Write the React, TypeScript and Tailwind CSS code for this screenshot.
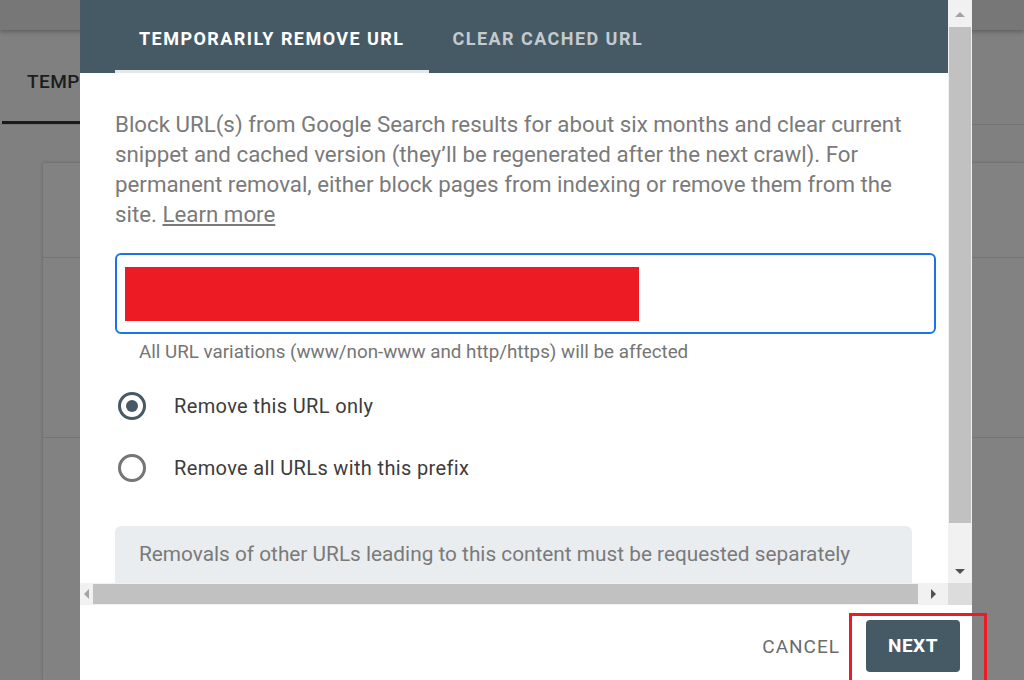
import React from "react";

const font = { fontFamily: "Roboto, 'Liberation Sans', sans-serif" };

function Radio({ checked }: { checked?: boolean }) {
    return (
        <span
            className={`flex h-[28px] w-[28px] items-center justify-center rounded-full border-[3px] ${
                checked ? "border-[#455a64]" : "border-[#757575]"
            }`}
        >
            {checked && <span className="h-[12px] w-[12px] rounded-full bg-[#455a64]" />}
        </span>
    );
}

function Backdrop() {
    return (
        <div className="flex h-full w-full flex-col bg-[#808080]">
            <div className="h-[30px] bg-[#777777] shadow-[0_2px_4px_rgba(0,0,0,0.25)]" />
            <div className="flex h-[95px] items-end border-b border-[#747474]">
                <div className="ml-[2px] flex h-full w-[78px] flex-col justify-end">
                    <div className="flex flex-1 items-center pl-[25px] pt-[14px] text-[19px] font-medium tracking-wide text-[#1c1c1c]">
                        TEMPORARILY
                    </div>
                    <div className="h-[3px] bg-[#1a1a1a]" />
                </div>
            </div>
            <div className="ml-[43px] mt-[38px] flex flex-1 flex-col bg-[#828282] shadow-[0_0_3px_rgba(0,0,0,0.25)]">
                <div className="h-[95px] border-b border-[#747474]" />
                <div className="h-[180px] border-b border-[#747474]" />
            </div>
        </div>
    );
}

export default function App() {
    return (
        <div className="relative h-[680px] w-[1024px] overflow-hidden" style={font}>
            <Backdrop />

            {/* Dialog */}
            <div className="absolute left-[80px] top-0 flex h-[680px] w-[892px] flex-col bg-white">
                <div className="flex h-[605px] flex-col">
                    <div className="flex h-[583px]">
                        <div className="flex-1 overflow-hidden">
                            <div className="flex h-[73px] bg-[#465a65] pl-[35px]">
                                <div className="relative flex items-center px-[24px] pt-[4px] text-[18px] font-bold tracking-[1.45px] text-white">
                                    TEMPORARILY REMOVE URL
                                    <span className="absolute bottom-0 left-0 right-0 h-[3px] bg-[#e3e8eb]" />
                                </div>
                                <div className="flex items-center px-[24px] pt-[4px] text-[18px] font-bold tracking-[1.45px] text-[#c3cbcf]">
                                    CLEAR CACHED URL
                                </div>
                            </div>

                            <div className="pl-[35px] pr-[12px] pt-[36px]">
                                <p className="w-[800px] text-[22.3px] leading-[30px] text-[#7a7a7a]">
                                    Block URL(s) from Google Search results for about six months and clear current
                                    snippet and cached version (they’ll be regenerated after the next crawl). For
                                    permanent removal, either block pages from indexing or remove them from the
                                    site. <span className="underline">Learn more</span>
                                </p>

                                <div className="mt-[24px] flex h-[81px] items-center rounded-md border-2 border-[#1a73e8] pl-[8px]">
                                    <div className="h-[54px] w-[514px] bg-[#ed1c24]" />
                                </div>
                                <div className="mt-[7px] pl-[24px] text-[18.8px] leading-[22px] text-[#757575]">
                                    All URL variations (www/non-www and http/https) will be affected
                                </div>

                                <div className="mt-[28px] flex items-center gap-[28px] pl-[3px]">
                                    <Radio checked />
                                    <span className="text-[20px] tracking-[0.35px] text-[#3c3c3c]">Remove this URL only</span>
                                </div>
                                <div className="mt-[32px] flex items-center gap-[28px] pl-[3px]">
                                    <Radio />
                                    <span className="text-[20px] tracking-[0.35px] text-[#3c3c3c]">
                                        Remove all URLs with this prefix
                                    </span>
                                </div>

                                <div className="mt-[43px] h-[70px] w-[797px] rounded-t-md bg-[#e9edf0] pl-[24px] pt-[16px] text-[20.8px] leading-[25px] text-[#7a7a7a]">
                                    Removals of other URLs leading to this content must be requested separately
                                </div>
                            </div>
                        </div>

                        {/* vertical scrollbar */}
                        <div className="flex w-[24px] flex-col bg-[#f1f1f1] pt-[2px]">
                            <div className="flex h-[25px] items-center justify-center">
                                <span className="h-0 w-0 border-x-[5px] border-b-[5px] border-x-transparent border-b-[#a3a3a3]" />
                            </div>
                            <div className="mx-[1px] h-[496px] bg-[#c1c1c1]" />
                            <div className="flex flex-1 items-end justify-center pb-[9px]">
                                <span className="h-0 w-0 border-x-[5px] border-t-[5px] border-x-transparent border-t-[#505050]" />
                            </div>
                        </div>
                    </div>

                    {/* horizontal scrollbar */}
                    <div className="flex h-[22px]">
                        <div className="flex flex-1 items-center bg-[#f1f1f1]">
                            <div className="flex w-[13px] justify-center">
                                <span className="h-0 w-0 border-y-[5px] border-r-[5px] border-y-transparent border-r-[#a3a3a3]" />
                            </div>
                            <div className="h-[20px] w-[825px] bg-[#c1c1c1]" />
                            <div className="flex flex-1 justify-center">
                                <span className="h-0 w-0 border-y-[5px] border-l-[5px] border-y-transparent border-l-[#505050]" />
                            </div>
                        </div>
                        <div className="w-[24px] bg-[#dcdcdc]" />
                    </div>
                </div>

                {/* footer */}
                <div className="flex flex-1 items-start justify-end gap-[26px] pr-[12px] pt-[15px]">
                    <button className="mt-[13px] text-[19px] tracking-[1px] text-[#6b6b6b]">CANCEL</button>
                    <button className="h-[52px] w-[94px] rounded-[4px] bg-[#465a65] text-[19px] font-bold tracking-[0.5px] text-white">
                        NEXT
                    </button>
                </div>
            </div>

            {/* red highlight */}
            <div className="absolute left-[849px] top-[613px] h-[72px] w-[138px] border-[3px] border-[#ed1c24]" />
        </div>
    );
}
